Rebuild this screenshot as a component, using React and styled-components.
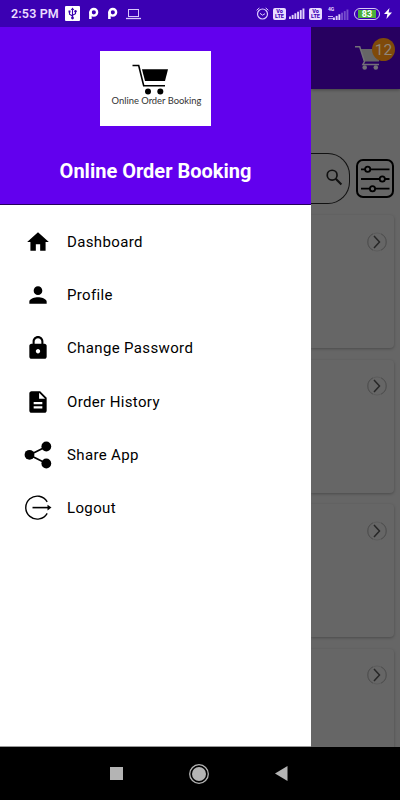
import React from "react";
import styled, { createGlobalStyle } from "styled-components";

const PURPLE = "#6200ee";
const DIM = "#666666";

const menu = [
  { label: "Dashboard", icon: "home" },
  { label: "Profile", icon: "person" },
  { label: "Change Password", icon: "lock" },
  { label: "Order History", icon: "file" },
  { label: "Share App", icon: "share" },
  { label: "Logout", icon: "logout" },
];

const paths = {
  home: "M10 20v-6h4v6h5v-8h3L12 3 2 12h3v8z",
  person:
    "M12 12c2.21 0 4-1.79 4-4s-1.79-4-4-4-4 1.79-4 4 1.79 4 4 4zm0 2c-2.67 0-8 1.34-8 4v2h16v-2c0-2.66-5.33-4-8-4z",
  lock: "M18 8h-1V6c0-2.76-2.24-5-5-5S7 3.24 7 6v2H6c-1.1 0-2 .9-2 2v10c0 1.1.9 2 2 2h12c1.1 0 2-.9 2-2V10c0-1.1-.9-2-2-2zm-6 9c-1.1 0-2-.9-2-2s.9-2 2-2 2 .9 2 2-.9 2-2 2zm3.1-9H8.9V6c0-1.71 1.39-3.1 3.1-3.1 1.71 0 3.1 1.39 3.1 3.1v2z",
  file: "M14 2H6c-1.1 0-2 .9-2 2v16c0 1.1.9 2 2 2h12c1.1 0 2-.9 2-2V8l-6-6zm2 16H8v-2h8v2zm0-4H8v-2h8v2zm-3-5V3.5L18.5 9H13z",
};

function MenuIcon({ name }) {
  if (name === "share") {
    return (
      <svg width="28" height="28" viewBox="0 0 28 28">
        <path d="M22.5 5.5 5.5 14l17 8.500" fill="none" stroke="#000" strokeWidth="1.7" />
        <circle cx="22.3" cy="5.5" r="4.9" />
        <circle cx="5.5" cy="13.8" r="4.9" />
        <circle cx="22.3" cy="22.5" r="4.9" />
      </svg>
    );
  }
  if (name === "logout") {
    return (
      <svg width="28" height="28" viewBox="0 0 28 28">
        <path
          d="M23.2 7.8A11.5 11.5 0 1 0 23.2 19.4"
          fill="none"
          stroke="#000"
          strokeWidth="1.4"
        />
        <path d="M8.5 13.6H24" stroke="#000" strokeWidth="1.6" />
        <path d="M23.5 10.8v5.6l4-2.8z" />
      </svg>
    );
  }
  return (
    <svg width="26" height="26" viewBox="0 0 24 24">
      <path d={paths[name]} />
    </svg>
  );
}

function Signal({ dim }) {
  return (
    <svg width="16" height="11" viewBox="0 0 16 11">
      {[0, 1, 2, 3, 4, 5].map((i) => (
        <rect
          key={i}
          x={i * 2.7}
          y={8.5 - i * 1.6}
          width="1.9"
          height={2.5 + i * 1.6}
          fill="#e9dcff"
          opacity={dim && i > 2 ? 0.35 : 0.95}
        />
      ))}
    </svg>
  );
}

function StatusBar() {
  return (
    <Status>
      <Clock>2:53 PM</Clock>
      <LeftIcons>
        <svg width="15" height="15" viewBox="0 0 15 15">
          <rect width="15" height="15" rx="1" fill="#fff" />
          <path
            d="M7.5 12V3M4.5 6v2.2l3 1.8M10.5 5.5v2.2l-3 1.5"
            stroke="#3900ae"
            strokeWidth="1.1"
            fill="none"
          />
          <path d="M5.7 4h3.6L7.5 1.5zM3.5 4.5h2v2h-2z" fill="#3900ae" />
          <circle cx="10.5" cy="5.3" r="1.2" fill="#3900ae" />
          <circle cx="7.5" cy="12" r="1.4" fill="#3900ae" />
        </svg>
        {[0, 1].map((i) => (
          <svg key={i} width="11" height="13" viewBox="0 0 11 13" fill="none" stroke="#fff">
            <circle cx="5.8" cy="5.3" r="3.3" strokeWidth="2.4" />
            <path d="M2.4 4.5V12" strokeWidth="2.6" />
          </svg>
        ))}
        <svg width="15" height="12" viewBox="0 0 15 12">
          <rect x="2.5" y="1.5" width="10" height="7" fill="none" stroke="#d9c8fa" />
          <path d="M0 10.5h15" stroke="#d9c8fa" strokeWidth="1.3" />
        </svg>
      </LeftIcons>
      <RightIcons>
        <svg width="13" height="13" viewBox="0 0 13 13" fill="none" stroke="#dccbff">
          <circle cx="6.5" cy="7" r="5" strokeWidth="1.2" />
          <path d="M.6 3.3 3.3.9M12.4 3.3 9.7.9M4 6.3l2.5 1.9L9 6.7" />
        </svg>
        <Volte>
          <span>Vo</span>
          <span>LTE</span>
        </Volte>
        <Signal />
        <Volte>
          <span>Vo</span>
          <span>LTE</span>
        </Volte>
        <Mobile>
          <small>4G</small>
          <Bars>
            <svg width="5" height="5" viewBox="0 0 5 5">
              <path d="M0 1.5h5M0 3.7h5" stroke="#c9b3f5" />
            </svg>
            <Signal dim />
          </Bars>
        </Mobile>
        <Battery>
          <span>83</span>
        </Battery>
        <svg width="8" height="11" viewBox="0 0 8 11">
          <path d="M5.5 0 0 6h3.4L2.4 11 8 4.6H4.6z" fill="#fff" />
        </svg>
      </RightIcons>
    </Status>
  );
}

export default function App() {
  return (
    <Phone>
      <GlobalStyle />
      <StatusBar />
      <Body>
        <Drawer>
          <DrawerHeader>
            <Logo>
              <svg width="37" height="32" viewBox="0 0 37 32">
                <path
                  d="M.5 1.5h6.2l5 20.300H33"
                  fill="none"
                  stroke="#000"
                  strokeWidth="1.6"
                />
                <path d="M10 5.3h26l-3 11.700H13z" />
                <circle cx="16" cy="27.5" r="3" />
                <circle cx="28.3" cy="27.5" r="3" />
              </svg>
              <LogoText>Online Order Booking</LogoText>
            </Logo>
            <Title>Online Order Booking</Title>
          </DrawerHeader>
          <Menu>
            {menu.map((item) => (
              <MenuItem key={item.label}>
                <IconBox>
                  <MenuIcon name={item.icon} />
                </IconBox>
                {item.label}
              </MenuItem>
            ))}
          </Menu>
        </Drawer>

        <Page>
          <AppBar>
            <Cart>
              <svg width="25" height="25" viewBox="0 0 25 25">
                <path d="M5.5 4H24v12.500H9z" fill="#666" />
                <path
                  d="M0 1.7h4.7l4.8 14.8-1.6 3H24"
                  fill="none"
                  stroke="#737078"
                  strokeWidth="1.5"
                />
                <circle cx="9.7" cy="22.5" r="2.3" fill="#737078" />
                <circle cx="20.8" cy="22.5" r="2.3" fill="#737078" />
              </svg>
              <Badge>12</Badge>
            </Cart>
          </AppBar>
          <SearchRow>
            <SearchField>
              <svg width="17" height="17" viewBox="0 0 18 18" fill="none" stroke="#111">
                <circle cx="6.5" cy="6.5" r="5.2" strokeWidth="1.8" />
                <path d="m10.3 10.3 6 6" strokeWidth="2.2" />
              </svg>
            </SearchField>
            <svg width="38" height="39" viewBox="0 0 38 39" fill="none" stroke="#000">
              <rect x="1" y="1" width="36" height="37" rx="6" strokeWidth="2" />
              <path d="M5 10.3h28.500M5 20h28.500M5 29.700h28.500" strokeWidth="1.8" />
              <g fill={DIM} strokeWidth="1.8">
                <circle cx="11.7" cy="10.3" r="2.6" />
                <circle cx="26.3" cy="20" r="2.6" />
                <circle cx="16.5" cy="29.7" r="2.6" />
              </g>
            </svg>
          </SearchRow>
          <Cards>
            {[0, 1, 2, 3].map((i) => (
              <Card key={i}>
                <svg width="20" height="20" viewBox="0 0 20 20" fill="none">
                  <circle cx="10" cy="10" r="9" stroke="#5c5c5c" />
                  <path d="M6 1.8a9 9 0 0 0 0 16.400M14 1.8a9 9 0 0 1 0 16.400" stroke="#505050" />
                  <path d="m7 4 5.5 6L7 16" stroke="#272727" strokeWidth="1.5" />
                </svg>
              </Card>
            ))}
          </Cards>
        </Page>
      </Body>
      <NavBar>
        <svg width="13" height="13" viewBox="0 0 13 13">
          <rect width="13" height="13" fill="#b4b4b4" />
        </svg>
        <svg width="20" height="20" viewBox="0 0 20 20">
          <circle cx="10" cy="10" r="9.3" fill="none" stroke="#b4b4b4" strokeWidth="1.3" />
          <circle cx="10" cy="10" r="7" fill="#b4b4b4" />
        </svg>
        <svg width="13" height="15" viewBox="0 0 13 15">
          <path d="M12.5 0v15L0 7.5z" fill="#b4b4b4" />
        </svg>
      </NavBar>
    </Phone>
  );
}

/* ---------------- styled-components ---------------- */

const GlobalStyle = createGlobalStyle`
  * {
    box-sizing: border-box;
  }

  body {
    margin: 0;
    font-family: Roboto, "Liberation Sans", sans-serif;
  }

  svg {
    display: block;
    flex-shrink: 0;
  }
`;

const Phone = styled.div`
  display: flex;
  flex-direction: column;
  width: 400px;
  height: 800px;
  overflow: hidden;
  background: #000;
`;

const Status = styled.header`
  display: flex;
  align-items: center;
  height: 27px;
  padding: 0 8px 0 11px;
  background: #3b00b3;
`;

const Clock = styled.span`
  width: 54px;
  color: #e9dcff;
  font-size: 12.5px;
  font-weight: 600;
  letter-spacing: 0.15px;
  white-space: nowrap;
`;

const LeftIcons = styled.div`
  display: flex;
  align-items: center;
  gap: 8px;
`;

const RightIcons = styled.div`
  display: flex;
  align-items: center;
  gap: 4px;
  margin-left: auto;
`;

const Volte = styled.div`
  display: flex;
  flex-direction: column;
  align-items: center;
  justify-content: center;
  width: 13px;
  height: 12px;
  border-radius: 2px;
  background: #e9dcff;
  color: #3b00b3;
  font-size: 5.5px;
  font-weight: 800;
  line-height: 5px;

  & + svg {
    margin-left: -1px;
  }
`;

const Mobile = styled.div`
  display: flex;
  flex-direction: column;
  height: 13px;
  margin-left: 2px;

  small {
    height: 4px;
    color: #e9dcff;
    font-size: 5px;
    font-weight: 700;
    line-height: 4px;
  }
`;

const Bars = styled.div`
  display: flex;
  align-items: flex-end;
  height: 9px;
`;

const Battery = styled.div`
  display: grid;
  place-items: center;
  width: 26px;
  height: 12px;
  margin-left: 1px;
  padding: 1px 3px;
  border: 1px solid #d8caf5;
  border-radius: 6px;

  span {
    width: 100%;
    background: #4caf3c;
    color: #fff;
    font-size: 9px;
    font-weight: 700;
    line-height: 8px;
    text-align: center;
  }
`;

const Body = styled.div`
  display: flex;
  height: 720px;
`;

const Drawer = styled.aside`
  width: 311px;
  flex-shrink: 0;
  border-bottom: 1px solid #999;
  background: #fff;
`;

const DrawerHeader = styled.div`
  display: flex;
  flex-direction: column;
  align-items: center;
  height: 178px;
  padding-top: 24px;
  border-bottom: 1px solid #25005c;
  background: ${PURPLE};
`;

const Logo = styled.div`
  display: flex;
  flex-direction: column;
  align-items: center;
  width: 111px;
  height: 75px;
  padding-top: 13px;
  background: #fff;

  svg {
    margin-right: 11px;
  }
`;

const LogoText = styled.span`
  margin-left: 2px;
  color: #333;
  font-family: Lato, "Liberation Sans", sans-serif;
  font-size: 9.4px;
  line-height: 10px;
  white-space: nowrap;
`;

const Title = styled.h1`
  margin: 33px 0 0;
  color: #fff;
  font-size: 20px;
  font-weight: 700;
  line-height: 24px;
  white-space: nowrap;
`;

const Menu = styled.nav`
  padding-top: 10px;
`;

const MenuItem = styled.div`
  display: flex;
  align-items: center;
  gap: 14px;
  height: 53.3px;
  padding-left: 23px;
  color: #000;
  font-size: 15px;
  font-weight: 450;
  letter-spacing: 0.36px;
`;

const IconBox = styled.span`
  display: grid;
  place-items: center;
  width: 30px;
  height: 30px;
`;

const Page = styled.main`
  display: flex;
  flex-direction: column;
  flex: 1;
  min-width: 0;
  overflow: hidden;
  background: ${DIM};
`;

const AppBar = styled.div`
  display: flex;
  justify-content: flex-end;
  height: 62px;
  flex-shrink: 0;
  padding: 18px 20px 0 0;
  background: #270060;
  box-shadow: 0 1px 3px #0005;
`;

const Cart = styled.div`
  position: relative;
  width: 25px;
  height: 25px;
`;

const Badge = styled.span`
  position: absolute;
  top: -7px;
  left: 17px;
  display: grid;
  place-items: center;
  width: 23px;
  height: 23px;
  border-radius: 50%;
  background: #7f4a0a;
  color: #8f8579;
  font-size: 15.5px;
`;

const SearchRow = styled.div`
  display: flex;
  align-items: center;
  gap: 6px;
  height: 51px;
  margin-top: 64px;
  flex-shrink: 0;
`;

const SearchField = styled.div`
  display: flex;
  align-items: center;
  justify-content: flex-end;
  width: 39px;
  height: 51px;
  padding: 0 6px 2px 0;
  border: 1px solid #111;
  border-left: 0;
  border-radius: 0 22px 22px 0;
`;

const Cards = styled.div`
  display: flex;
  flex-direction: column;
  gap: 11.5px;
  padding: 11px 6px 0 0;
`;

const Card = styled.section`
  display: flex;
  justify-content: flex-end;
  height: 133px;
  flex-shrink: 0;
  padding: 16.5px 7px 0 0;
  border-radius: 0 4px 4px 0;
  background: ${DIM};
  box-shadow: 0 1px 3px #0004;
`;

const NavBar = styled.footer`
  display: flex;
  align-items: center;
  gap: 66px;
  height: 53px;
  padding-left: 110px;
  background: #000;
`;
